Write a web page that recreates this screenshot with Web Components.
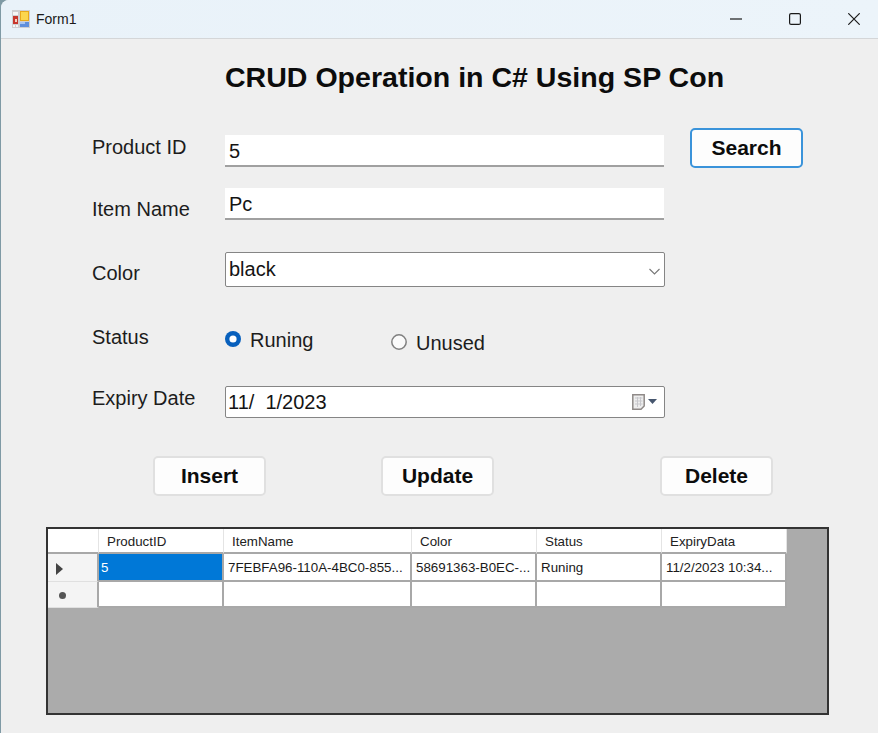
<!DOCTYPE html>
<html>
<head>
<meta charset="utf-8">
<title>Form1</title>
<style>
  html, body { margin: 0; height: 100%; background: #7f9aa5; }
  body { font-family: "Liberation Sans", Arial, sans-serif; color: #111; overflow: hidden; }
  form-row.r1 { margin-top: 36px; }
  form-row.r2 { margin-top: 20px; }
  form-row.r3 { margin-top: 31px; }
  form-row.r4 { margin-top: 38px; }
  form-row.r5 { margin-top: 31px; }
</style>
</head>
<body>

<win-frame caption="Form1">
  <form-title>CRUD Operation in C# Using SP Con</form-title>

  <form-row class="r1" label="Product ID" label-top="7">
    <text-box style="margin-top:7px">5</text-box>
    <push-button style="margin-left:26px" focused>Search</push-button>
  </form-row>
  <form-row class="r2" label="Item Name" label-top="9">
    <text-box>Pc</text-box>
  </form-row>
  <form-row class="r3" label="Color" label-top="9">
    <combo-box>black</combo-box>
  </form-row>
  <form-row class="r4" label="Status" label-top="0">
    <radio-item checked style="width:166px;margin-top:3px">Runing</radio-item>
    <radio-item style="margin-top:6px">Unused</radio-item>
  </form-row>
  <form-row class="r5" label="Expiry Date" label-top="0">
    <date-picker>11/  1/2023</date-picker>
  </form-row>

  <button-bar>
    <push-button>Insert</push-button>
    <push-button style="margin-left:115px">Update</push-button>
    <push-button style="margin-left:166px">Delete</push-button>
  </button-bar>

  <data-grid></data-grid>
</win-frame>

<script>
// Ventana con barra de título
class WinFrame extends HTMLElement {
  connectedCallback() {
    this.attachShadow({ mode: "open" });
    this.shadowRoot.innerHTML = `
      <style>
        :host { display: block; height: 733px; margin-left: 1px; background: #efefef; border-top-left-radius: 8px; overflow: hidden; }
        .bar { height: 38px; display: flex; align-items: center; background: linear-gradient(90deg, #e9f2f9, #ecf4fa); border-bottom: 1px solid #d4d6d8; padding: 0 18px 0 11px; }
        .icon { width: 18px; height: 18px; display: block; }
        .cap { font-size: 14px; margin-left: 6px; color: #1a1a1a; flex: 1; }
        .ctl { display: block; width: 12px; height: 12px; margin-left: 47px; }
      </style>
      <div class="bar">
        <svg class="icon" viewBox="0 0 18 18">
          <rect width="18" height="18" fill="#cfcfd2"/>
          <rect x="1" y="2" width="5" height="3" fill="#f6f6f6"/>
          <rect x="1" y="6" width="5" height="8" fill="#c8362c"/>
          <rect x="3" y="9" width="2" height="3" fill="#f4d0c0"/>
          <rect x="1" y="15" width="2" height="2" fill="#f6f6f6"/>
          <rect x="4" y="15" width="2" height="2" fill="#f6f6f6"/>
          <rect x="8" y="1" width="9" height="10" fill="#e8a81c"/>
          <rect x="9" y="2" width="7" height="8" fill="#fbd64e"/>
          <rect x="8" y="12" width="9" height="5" fill="#5f8fdc"/>
          <rect x="8" y="12" width="5" height="2" fill="#a8c4f0"/>
        </svg>
        <span class="cap">${this.getAttribute("caption")}</span>
        <svg class="ctl" viewBox="0 0 12 12"><path d="M0 6H12" stroke="#1a1a1a" stroke-width="1.2"/></svg>
        <svg class="ctl" viewBox="0 0 12 12"><rect x=".6" y=".6" width="10.8" height="10.8" rx="1.5" fill="none" stroke="#1a1a1a" stroke-width="1.2"/></svg>
        <svg class="ctl" viewBox="0 0 12 12"><path d="M.3 .3L11.7 11.7M11.7 .3L.3 11.7" stroke="#1a1a1a" stroke-width="1.2"/></svg>
      </div>
      <slot></slot>`;
  }
}

class FormTitle extends HTMLElement {
  connectedCallback() {
    this.attachShadow({ mode: "open" });
    this.shadowRoot.innerHTML = `
      <style>
        :host { display: block; padding: 23px 0 0 224px; font: bold 28.55px/30px "Liberation Sans", Arial, sans-serif; color: #0c0c0c; white-space: nowrap; }
      </style>
      <slot></slot>`;
  }
}

// Fila del formulario: etiqueta + controles
class FormRow extends HTMLElement {
  connectedCallback() {
    this.attachShadow({ mode: "open" });
    const top = this.getAttribute("label-top") || 0;
    this.shadowRoot.innerHTML = `
      <style>
        :host { display: flex; align-items: flex-start; padding-left: 91px; }
        .lbl { width: 133px; flex: none; padding-top: ${top}px; font-size: 20px; line-height: 24px; color: #1c1c1c; white-space: nowrap; }
      </style>
      <div class="lbl">${this.getAttribute("label")}</div>
      <slot></slot>`;
  }
}

class TextBox extends HTMLElement {
  connectedCallback() {
    this.attachShadow({ mode: "open" });
    this.shadowRoot.innerHTML = `
      <style>
        :host { display: block; box-sizing: border-box; width: 439px; height: 32px; padding-left: 4px; background: #fff; border-bottom: 2px solid #a0a0a0; font-size: 20px; line-height: 32px; color: #141414; }
      </style>
      <slot></slot>`;
  }
}

class ComboBox extends HTMLElement {
  connectedCallback() {
    this.attachShadow({ mode: "open" });
    this.shadowRoot.innerHTML = `
      <style>
        :host { display: flex; align-items: center; box-sizing: border-box; width: 440px; height: 35px; padding: 0 4px 0 3px; background: #fff; border: 1px solid #858585; border-radius: 2px; font-size: 20px; color: #141414; }
        span { flex: 1; }
        svg { display: block; width: 11px; height: 7px; margin: 3px 0 0 0; }
      </style>
      <span><slot></slot></span>
      <svg viewBox="0 0 11 7"><path d="M.5 1L5.5 6L10.5 1" fill="none" stroke="#777" stroke-width="1.1"/></svg>`;
  }
}

class RadioItem extends HTMLElement {
  connectedCallback() {
    this.attachShadow({ mode: "open" });
    const on = this.hasAttribute("checked");
    const mark = on
      ? '<circle cx="8" cy="8" r="8" fill="#0860bd"/><circle cx="8" cy="8" r="3.6" fill="#fff"/>'
      : '<circle cx="8" cy="8" r="7.2" fill="#fafafa" stroke="#808080" stroke-width="1.5"/>';
    this.shadowRoot.innerHTML = `
      <style>
        :host { display: flex; align-items: center; flex: none; font-size: 20px; line-height: 24px; color: #1c1c1c; }
        svg { display: block; width: 16px; height: 16px; margin-right: 9px; position: relative; top: -1px; }
      </style>
      <svg viewBox="0 0 16 16">${mark}</svg>
      <slot></slot>`;
  }
}

class DatePicker extends HTMLElement {
  connectedCallback() {
    this.attachShadow({ mode: "open" });
    this.shadowRoot.innerHTML = `
      <style>
        :host { display: flex; align-items: center; box-sizing: border-box; width: 440px; height: 32px; padding: 0 7px 0 2px; background: #fff; border: 1px solid #858585; border-radius: 2px; font-size: 20px; color: #141414; white-space: pre; }
        span { flex: 1; }
        svg { display: block; width: 25px; height: 16px; }
      </style>
      <span><slot></slot></span>
      <svg viewBox="0 0 25 16">
        <path d="M.8 .8H12.2V12L9 15.2H.8Z" fill="#eeeeee" stroke="#8f8a88" stroke-width="1.5"/>
        <path d="M3 4H10.5M3 7H10.5M3 10H10.5M5.5 3V13M8.5 3V12" stroke="#c8c8cc" fill="none"/>
        <path d="M16 5H25L20.5 10Z" fill="#46566e"/>
      </svg>`;
  }
}

class PushButton extends HTMLElement {
  connectedCallback() {
    this.attachShadow({ mode: "open" });
    const focused = this.hasAttribute("focused");
    this.shadowRoot.innerHTML = `
      <style>
        :host { display: flex; align-items: center; justify-content: center; flex: none; box-sizing: border-box; width: 113px; height: 40px; background: #fdfdfd; border: ${focused ? "2px solid #3a93da" : "2px solid #e0e0e0"}; border-radius: 5px; font: bold 21px "Liberation Sans", Arial, sans-serif; color: #0c0c0c; }
      </style>
      <slot></slot>`;
  }
}

class ButtonBar extends HTMLElement {
  connectedCallback() {
    this.attachShadow({ mode: "open" });
    this.shadowRoot.innerHTML = `
      <style>:host { display: flex; margin-top: 38px; padding-left: 152px; }</style>
      <slot></slot>`;
  }
}

// Datos de la tabla
const grid_columns = ["ProductID", "ItemName", "Color", "Status", "ExpiryData"];
const grid_rows = [["5", "7FEBFA96-110A-4BC0-855...", "58691363-B0EC-...", "Runing", "11/2/2023 10:34..."]];

class DataGrid extends HTMLElement {
  connectedCallback() {
    this.attachShadow({ mode: "open" });
    const head = grid_columns.map(c => `<div class="h">${c}</div>`).join("");
    const rows = grid_rows.map(r =>
      `<div class="rh"><svg width="7" height="12" viewBox="0 0 7 12"><path d="M0 0L7 6L0 12Z" fill="#444"/></svg></div>` +
      r.map((c, i) => `<div class="c${i === 0 ? " sel" : ""}">${c}</div>`).join("")).join("");
    const blank = grid_columns.map(() => `<div class="c"></div>`).join("");
    this.shadowRoot.innerHTML = `
      <style>
        :host { display: block; box-sizing: border-box; width: 783px; height: 188px; margin: 31px 0 0 45px; background: #ababab; border: 2px solid #333; font-size: 13.33px; color: #1a1a1a; }
        .g { display: grid; grid-template-columns: 51px 125px 188px 125px 125px 125px; grid-template-rows: 25px 28px 26px; width: 739px; background: #fff; }
        .h, .c, .rh, .corner { box-sizing: border-box; white-space: nowrap; overflow: hidden; }
        .corner, .h { background: #fff; border-right: 1px solid #e4e4e4; border-bottom: 2px solid #a8a8a8; }
        .h { padding-left: 8px; line-height: 26px; color: #222; }
        .rh { display: flex; align-items: center; padding: 2px 0 0 8px; background: #f4f4f4; border-right: 2px solid #a8a8a8; border-bottom: 1px solid #e0e0e0; }
        .c { padding-left: 4px; line-height: 28px; background: #fff; border-right: 2px solid #a8a8a8; border-bottom: 2px solid #a8a8a8; }
        .c.sel { background: #0078d7; color: #fff; padding-left: 2px; }
        .dot { width: 7px; height: 7px; border-radius: 50%; background: #555; margin: 0 0 0 3px; }
      </style>
      <div class="g">
        <div class="corner"></div>${head}
        ${rows}
        <div class="rh"><div class="dot"></div></div>${blank}
      </div>`;
  }
}

customElements.define("win-frame", WinFrame);
customElements.define("form-title", FormTitle);
customElements.define("form-row", FormRow);
customElements.define("text-box", TextBox);
customElements.define("combo-box", ComboBox);
customElements.define("radio-item", RadioItem);
customElements.define("date-picker", DatePicker);
customElements.define("push-button", PushButton);
customElements.define("button-bar", ButtonBar);
customElements.define("data-grid", DataGrid);
</script>
</body>
</html>
